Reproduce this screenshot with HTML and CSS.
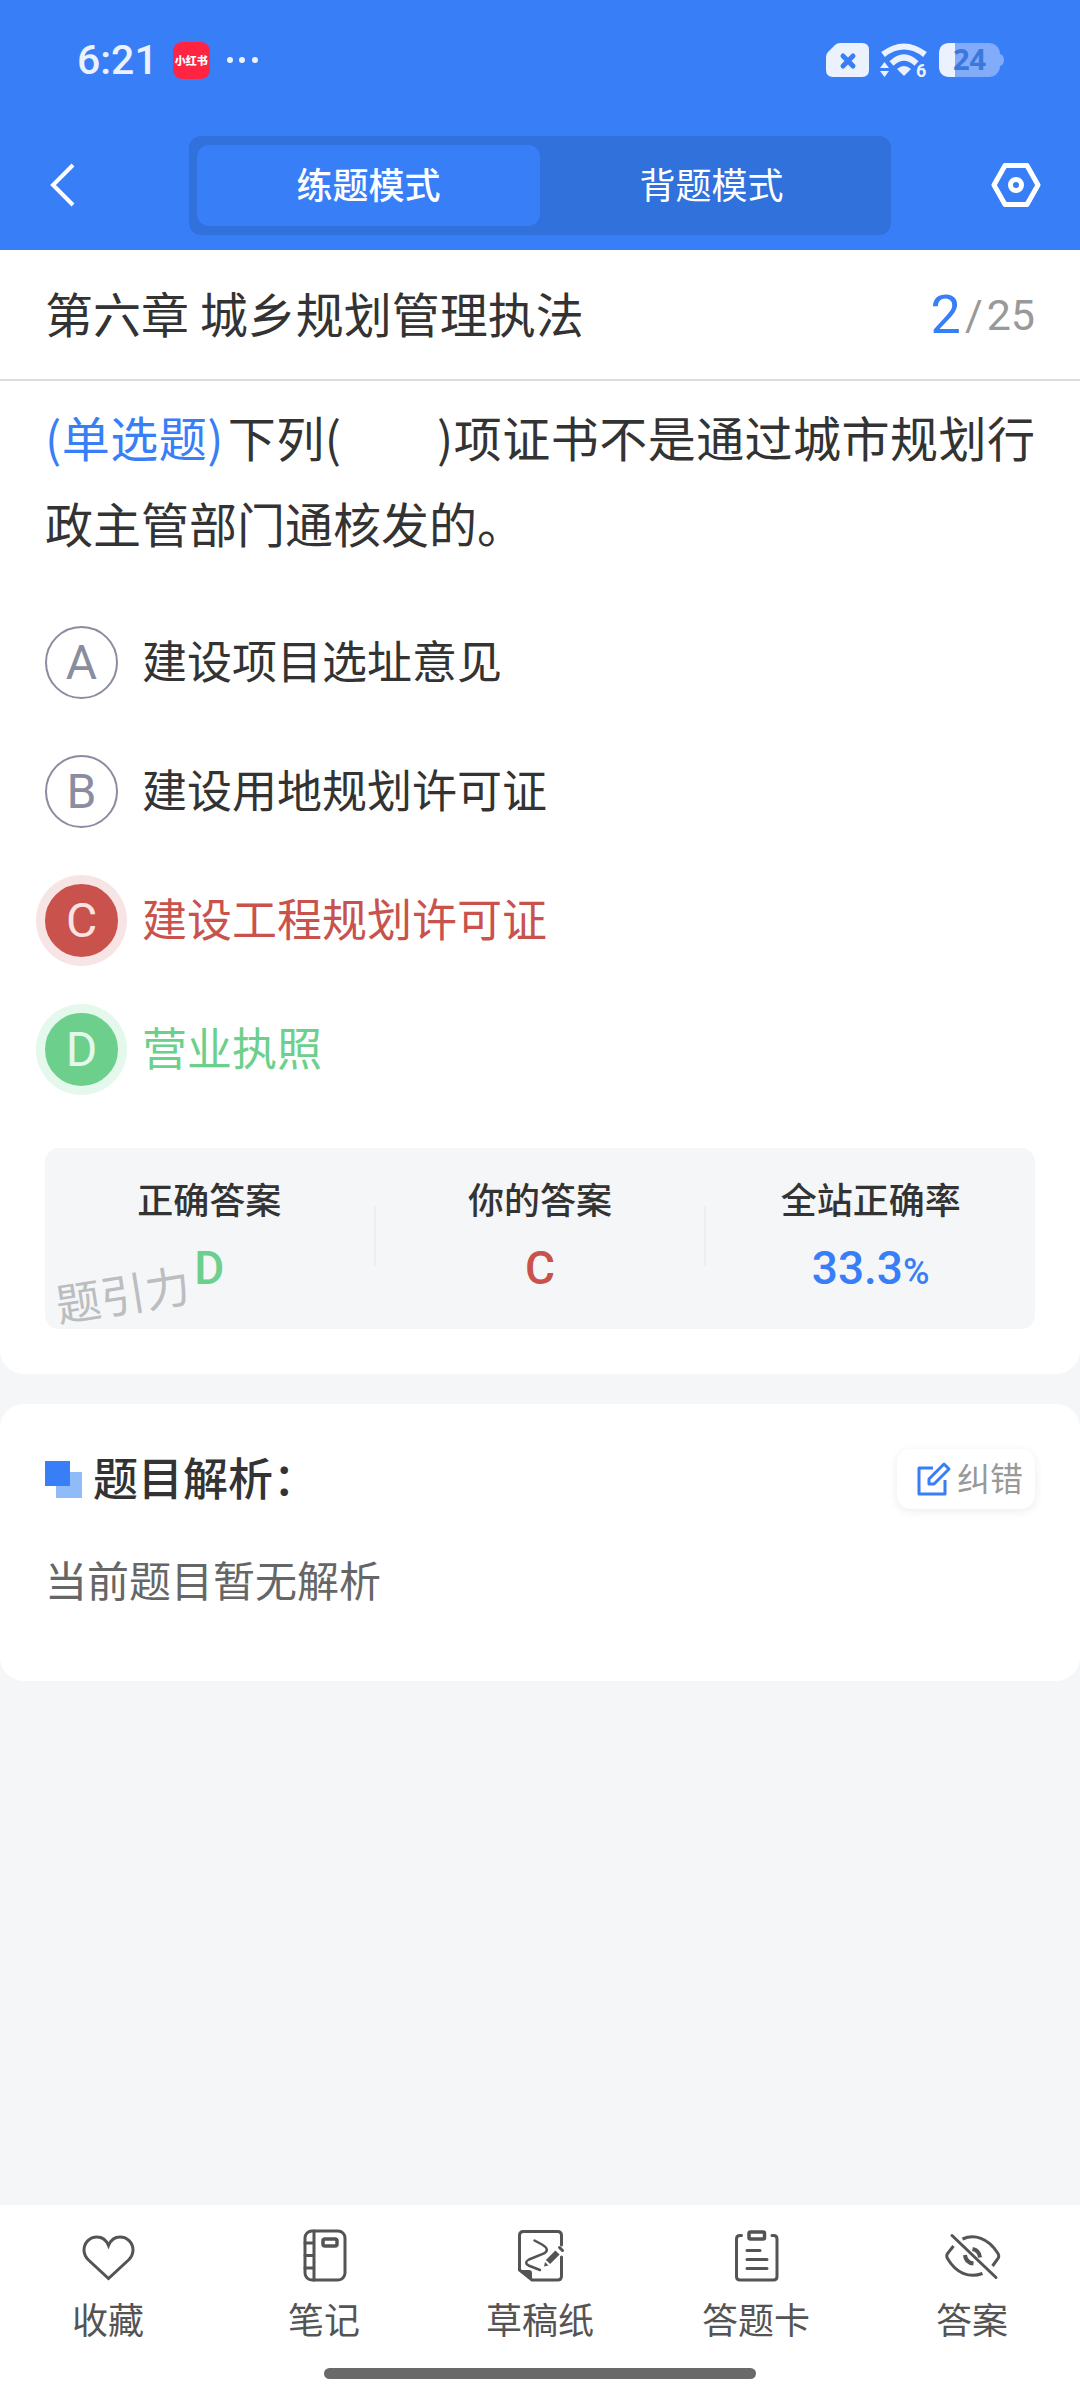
FILE: index.html
```html
<!DOCTYPE html>
<html lang="zh-CN">
<head>
  <meta charset="UTF-8" />
  <meta name="viewport" content="width=device-width, initial-scale=1.0" />
  <title>第六章 城乡规划管理执法</title>
  <link rel="stylesheet" href="styles.css">
</head>
<body>
  <header class="header">
    <div class="status-bar">
      <span class="time">6:21</span>
      <span class="app-badge">小红书</span>
      <svg class="dots" width="28" height="8" viewBox="0 0 28 8" fill="currentColor">
        <circle cx="3" cy="4" r="3" /><circle cx="15" cy="4" r="3" /><circle cx="28" cy="4" r="3" />
      </svg>
      <div class="status-icons">
        <svg width="43" height="34" viewBox="0 0 43 34">
          <path d="M14 0H36Q43 0 43 7V27Q43 34 36 34H7Q0 34 0 27V14Q0 11 2 9L9 2Q11 0 14 0Z" fill="currentColor" />
          <path d="M17 13L27 23M27 13L17 23" stroke="#387ef7" stroke-width="5" stroke-linecap="round" />
        </svg>
        <svg width="48" height="36" viewBox="0 0 48 36">
          <path d="M3 12.5Q24 -3.500 45 12.500" fill="none" stroke="currentColor" stroke-width="6" />
          <path d="M11.500 21.500Q24 9.500 36.500 21.500" fill="none" stroke="currentColor" stroke-width="6" />
          <path d="M17 27Q24 21 31 27L25 33Q24 34 23 33Z" fill="currentColor" />
          <path d="M0 26L4.500 20L9 26ZM0 29H9L4.500 35Z" fill="currentColor" />
          <text class="wifi-gen" x="36" y="35">6</text>
        </svg>
        <svg width="66" height="34" viewBox="0 0 66 34">
          <rect width="61" height="34" rx="11" fill="#82abfa" />
          <path d="M61 11Q65 12 65 17Q65 22 61 23Z" fill="#82abfa" />
          <path d="M16 0V34H11Q0 34 0 23V11Q0 0 11 0Z" fill="currentColor" />
          <text class="battery-level" x="14" y="27">24</text>
        </svg>
      </div>
    </div>
    <nav class="top-nav">
      <button class="back" aria-label="返回">
        <svg width="40" height="48" viewBox="0 0 40 48" fill="none" stroke="currentColor" stroke-width="4">
          <path d="M34 4L14 24L34 44" />
        </svg>
      </button>
      <div class="modes">
        <button class="mode active">练题模式</button>
        <button class="mode">背题模式</button>
      </div>
      <button class="settings" aria-label="设置">
        <svg width="50" height="48" viewBox="0 0 50 48" fill="none" stroke="currentColor" stroke-width="5" stroke-linejoin="round">
          <path d="M14 4.500H36L47 24L36 43.500H14L3 24Z" />
          <circle cx="25" cy="24" r="5.500" />
        </svg>
      </button>
    </nav>
  </header>

  <main>
    <section class="card question-card">
      <div class="chapter">
        <h1>第六章 城乡规划管理执法</h1>
        <p class="progress"><span class="current">2</span><span>/</span><span>25</span></p>
      </div>
      <div class="question">
        <p class="stem"><span class="type">(单选题)</span>下列(&emsp;&emsp;)项证书不是通过城市规划行政主管部门通核发的。</p>

        <div class="options">
          <label class="option">
            <input type="radio" name="answer" value="A" />
            <span class="letter">A</span>建设项目选址意见
          </label>
          <label class="option">
            <input type="radio" name="answer" value="B" />
            <span class="letter">B</span>建设用地规划许可证
          </label>
          <label class="option wrong">
            <input type="radio" name="answer" value="C" checked />
            <span class="letter">C</span>建设工程规划许可证
          </label>
          <label class="option right">
            <input type="radio" name="answer" value="D" />
            <span class="letter">D</span>营业执照
          </label>
        </div>

        <div class="result">
          <div class="result-item">
            <h2>正确答案</h2>
            <p class="value green">D</p>
          </div>
          <div class="divider"></div>
          <div class="result-item">
            <h2>你的答案</h2>
            <p class="value red">C</p>
          </div>
          <div class="divider"></div>
          <div class="result-item">
            <h2>全站正确率</h2>
            <p class="value blue">33.3<small>%</small></p>
          </div>
          <span class="watermark">题引力</span>
        </div>
      </div>
    </section>

    <section class="card analysis">
      <div class="analysis-head">
        <svg width="37" height="37" viewBox="0 0 37 37">
          <rect x="11" y="11" width="26" height="26" fill="#8fbcf9" />
          <rect width="25" height="25" fill="#387ef7" />
        </svg>
        <h2>题目解析：</h2>
        <button class="report">
          <svg width="34" height="34" viewBox="0 0 34 34" fill="none" stroke="#387ef7" stroke-width="3" stroke-linejoin="round">
            <path d="M16 6H2V32H28V18" />
            <path d="M12 17L27 2L32 7L17 22H12Z" />
          </svg>
          <span>纠错</span>
        </button>
      </div>
      <p class="analysis-text">当前题目暂无解析</p>
    </section>
  </main>

  <footer class="footer">
    <nav class="tabs">
      <button class="tab">
        <svg class="icon" viewBox="0 0 56 56">
          <path d="M28.500 18.500C26 12.500 21.500 10 17 10C9.500 10 4 16 4 23C4 27 5.500 30 8.500 33L28.500 51.500L48.500 33C51.500 30 53 27 53 23C53 16 47.500 10 40 10C35.500 10 31 12.500 28.500 18.500Z" />
        </svg>
        收藏
      </button>
      <button class="tab">
        <svg class="icon" viewBox="0 0 56 56">
          <rect x="9" y="4" width="40" height="49" rx="7" />
          <path d="M18 4V53M9 16H18M9 28.500H18M9 41H18" />
          <rect x="27" y="12" width="14" height="7" rx="2" stroke-width="3.500" />
        </svg>
        笔记
      </button>
      <button class="tab">
        <svg class="icon" viewBox="0 0 56 56">
          <path d="M49.500 18V8.500Q49.500 4.500 45.500 4.500H11.500Q7.500 4.500 7.500 8.500V43L20 53H45.500Q49.500 53 49.500 49V30" />
          <path d="M7 43H17Q20 43 20 46V54Z" fill="currentColor" stroke="none" />
          <path d="M22.500 13.500L30 17.500Q38.500 22.500 32 26.500L17 32.500Q11.500 35.500 16.500 38.500L28 43" stroke-width="2.500" />
          <path d="M36 35L45.500 25.500" stroke-width="6" stroke-linecap="butt" />
          <path d="M32 39.500L33 35L36.500 38.500Z" fill="currentColor" stroke="none" />
          <path d="M47.500 20.500L50.500 23.500" stroke-width="3" />
        </svg>
        草稿纸
      </button>
      <button class="tab">
        <svg class="icon" viewBox="0 0 56 56">
          <path d="M13.500 8.500H12Q8.500 8.500 8.500 12V49.500Q8.500 53 12 53H45.500Q49 53 49 49.500V12Q49 8.500 45.500 8.500H44" />
          <rect x="21" y="5" width="15.500" height="7" rx="1.500" stroke-width="3.500" />
          <path d="M19 23.500H32M19 32.500H39M19 41.500H39" />
        </svg>
        答题卡
      </button>
      <button class="tab">
        <svg class="icon" viewBox="0 0 56 56">
          <path d="M8 8.500L52 50.500" />
          <path d="M18.500 12C30 7 44 10.500 54 26.500Q55.500 29 54 31.500L48.500 39" stroke-linecap="butt" />
          <path d="M9.500 19L3.500 26.500Q2 29 3.500 31.500C12 46 25 51.500 38.500 46.500" stroke-linecap="butt" />
          <path d="M28.500 22Q35.500 23.500 36 30.500M21 28Q21.500 35.500 29.500 36.500" stroke-width="4" stroke-linecap="butt" />
        </svg>
        答案
      </button>
    </nav>
    <div class="home-bar"></div>
  </footer>
</body>
</html>
```

FILE: styles.css
```css
* {
  box-sizing: border-box;
}
body {
  display: flex;
  flex-direction: column;
  min-height: 100vh;
  margin: 0;
  background-color: #f4f6f8;
  color: #333;
  font-family: "Noto Sans CJK SC", sans-serif;
}
h1, h2, p {
  margin: 0;
  font-weight: 400;
}
button {
  padding: 0;
  border: none;
  background: none;
  color: inherit;
  font-family: inherit;
  cursor: pointer;
}
svg {
  display: block;
  flex-shrink: 0;
  overflow: visible;
}

/* header */
.header {
  background-color: #387ef7;
  color: #fff;
}
.status-bar {
  display: flex;
  align-items: center;
  height: 120px;
  padding: 0 75px 0 77px;
  color: #ebf2fe;
}
.time {
  font: 500 41px Roboto, sans-serif;
}
.app-badge {
  width: 37px;
  margin: 0 17px 0 15px;
  border-radius: 9px;
  background-color: #fe2442;
  color: #fff;
  font-size: 11px;
  font-weight: 900;
  line-height: 37px;
  text-align: center;
}
.status-icons {
  display: flex;
  align-items: center;
  gap: 11px;
  margin-left: auto;
}
.wifi-gen {
  fill: currentColor;
  font: 700 18px Roboto, sans-serif;
}
.battery-level {
  fill: #3b78dd;
  font: 700 29px "Noto Sans", sans-serif;
}
.top-nav {
  display: grid;
  grid-template-columns: 1fr 65% 1fr;
  align-items: center;
  height: 130px;
}
.back {
  justify-self: start;
  margin-left: 39px;
}
.settings {
  justify-self: end;
  margin-right: 39px;
}
.modes {
  display: grid;
  grid-template-columns: 1fr 1fr;
  padding: 9px 8px;
  border-radius: 12px;
  background-color: #3071dc;
}
.mode {
  height: 81px;
  padding-bottom: 4px;
  border-radius: 12px;
  font-size: 36px;
}
.mode.active {
  background-color: #387ef7;
  font-weight: 500;
}

/* question */
.card {
  border-radius: 24px;
  background-color: #fff;
}
.question-card {
  border-radius: 0 0 24px 24px;
}
.chapter {
  display: flex;
  align-items: center;
  justify-content: space-between;
  height: 131px;
  padding: 0 45px;
  border-bottom: 2px solid #ddd;
}
.chapter h1 {
  padding-bottom: 6px;
  font-size: 48px;
}
.progress {
  display: flex;
  align-items: center;
  gap: 4px;
  color: #999;
  font-family: Roboto, sans-serif;
  font-size: 43px;
}
.current {
  color: #387ef7;
  font-size: 54px;
}
.question {
  padding: 12px 45px 45px;
}
.stem {
  font-size: 48px;
  line-height: 86px;
  text-align: justify;
}
.type {
  margin-right: 4px;
  color: #387ef7;
}
.options {
  display: grid;
  gap: 56px;
  margin: 61px 0 62px;
}
.option {
  display: flex;
  gap: 24px;
  font-size: 45px;
  line-height: 67px;
}
.option input {
  position: absolute;
  opacity: 0;
}
.letter {
  width: 73px;
  height: 73px;
  border: 2px solid #8a8d9f;
  border-radius: 50%;
  color: #8a8d9f;
  font-family: Roboto, sans-serif;
  font-size: 48px;
  line-height: 70px;
  text-align: center;
}
.wrong {
  color: #c9524d;
}
.right {
  color: #6cd08c;
}
.wrong .letter {
  border-color: #c9524d;
  background-color: #c9524d;
  box-shadow: 0 0 0 9px #f7e4e4;
  color: #fbe3e2;
}
.right .letter {
  border-color: #6cd08c;
  background-color: #6cd08c;
  box-shadow: 0 0 0 9px #e4f8eb;
  color: #e4f8eb;
}

/* result */
.result {
  position: relative;
  display: grid;
  grid-template-columns: 1fr 2px 1fr 2px 1fr;
  align-items: center;
  padding: 26px 0 31px;
  border-radius: 14px;
  background-color: #f4f6f8;
  text-align: center;
}
.result h2 {
  margin-bottom: 16px;
  font-size: 36px;
  font-weight: 500;
  line-height: 48px;
}
.divider {
  height: 60px;
  background-color: #eceef0;
}
.value {
  font: 500 46px/60px Roboto, sans-serif;
}
.value small {
  font-size: 36px;
  line-height: 36px;
}
.green {
  color: #6cd08c;
}
.red {
  color: #c9524d;
}
.blue {
  color: #387ef7;
}
.watermark {
  position: absolute;
  left: 10px;
  bottom: 6px;
  color: #bbbdbf;
  font-size: 45px;
  line-height: 60px;
  transform: rotate(-9deg);
}

/* analysis */
.analysis {
  margin-top: 30px;
  padding: 45px 45px 72px;
}
.analysis-head {
  display: flex;
  align-items: center;
  gap: 11px;
}
.analysis-head h2 {
  padding-bottom: 4px;
  font-size: 45px;
  font-weight: 500;
  line-height: 56px;
}
.report {
  display: flex;
  align-items: center;
  gap: 6px;
  height: 60px;
  margin-left: auto;
  padding: 0 12px 0 20px;
  border-radius: 14px;
  box-shadow: 0 2px 10px rgba(0, 0, 0, 0.08);
  color: #999;
  font-size: 33px;
}
.report span {
  padding-bottom: 4px;
}
.analysis-text {
  margin-top: 40px;
  color: #666;
  font-size: 42px;
  line-height: 60px;
}

/* bottom tabs */
.footer {
  margin-top: auto;
  padding: 22px 0 21px;
  background-color: #fff;
}
.tabs {
  display: grid;
  grid-template-columns: repeat(5, 1fr);
}
.tab {
  display: flex;
  flex-direction: column;
  align-items: center;
  gap: 11px;
  color: #545454;
  font-size: 36px;
  line-height: 48px;
}
.icon {
  width: 56px;
  height: 56px;
  fill: none;
  stroke: currentColor;
  stroke-width: 3;
  stroke-linecap: round;
}
.home-bar {
  width: 40%;
  height: 11px;
  margin: 26px auto 0;
  border-radius: 6px;
  background-color: #696969;
}
```
